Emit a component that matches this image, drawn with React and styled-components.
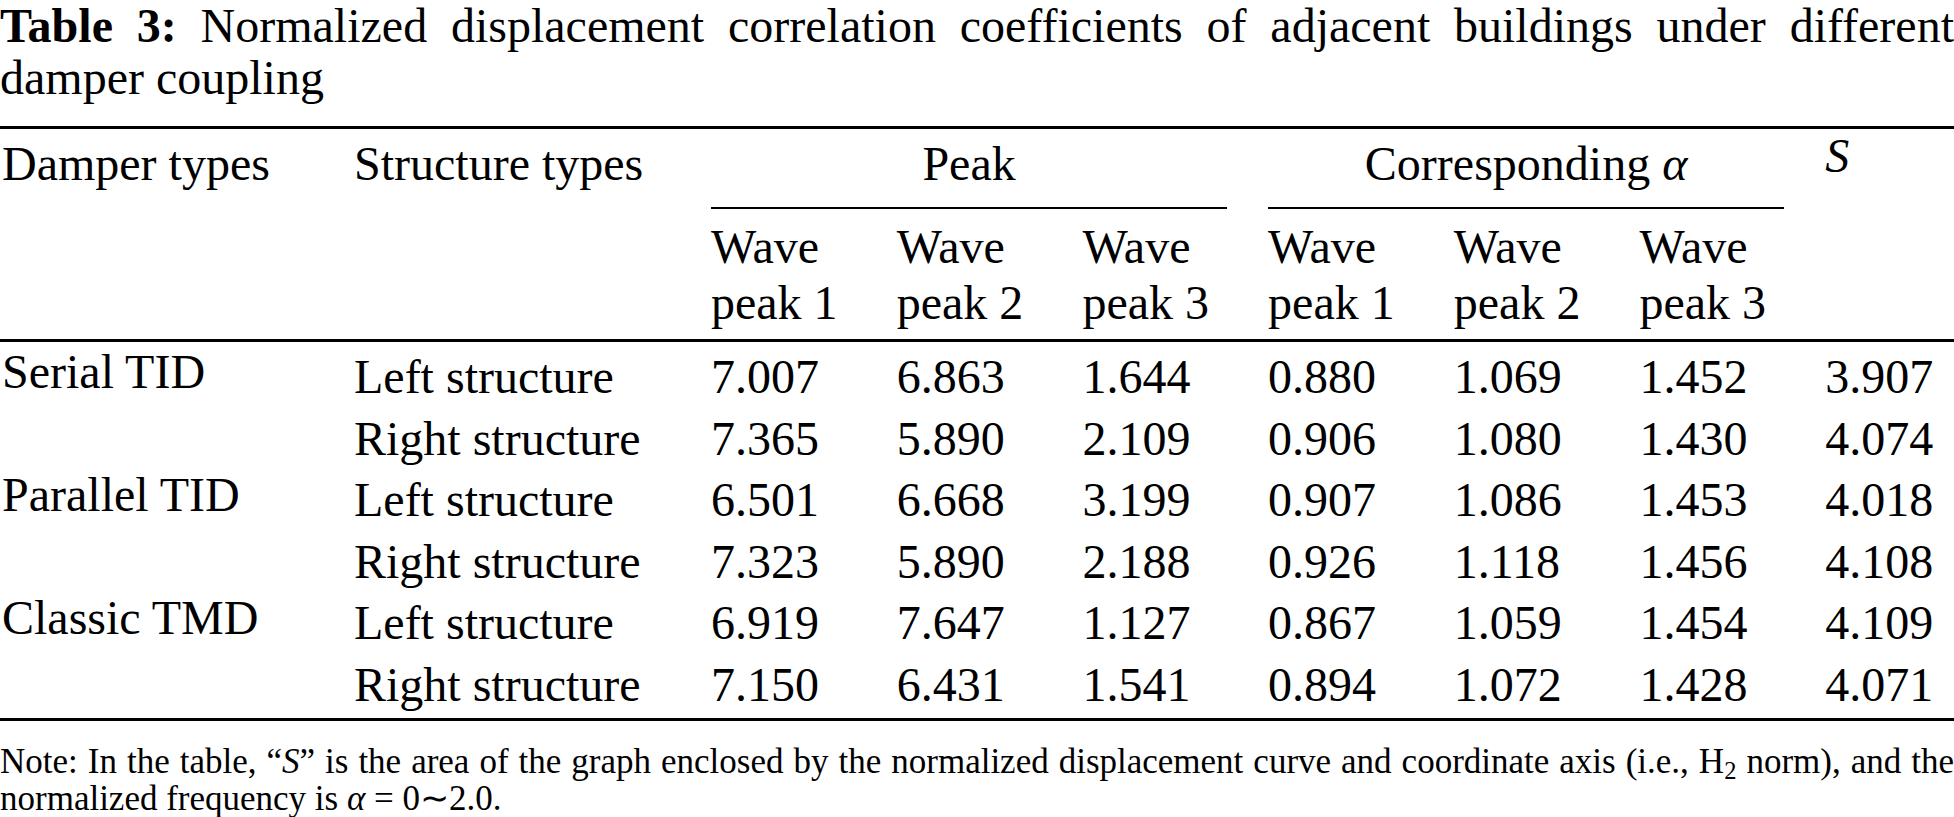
import React from "react";
import styled, { createGlobalStyle } from "styled-components";

const GlobalStyle = createGlobalStyle`
  html, body {
    margin: 0;
    padding: 0;
    background: #ffffff;
  }
  body {
    font-family: "Liberation Serif", "Times New Roman", serif;
    color: #000000;
  }
`;

const groups = [
  {
    damper: "Serial TID",
    rows: [
      { side: "Left structure", peak: ["7.007", "6.863", "1.644"], alpha: ["0.880", "1.069", "1.452"], s: "3.907" },
      { side: "Right structure", peak: ["7.365", "5.890", "2.109"], alpha: ["0.906", "1.080", "1.430"], s: "4.074" },
    ],
  },
  {
    damper: "Parallel TID",
    rows: [
      { side: "Left structure", peak: ["6.501", "6.668", "3.199"], alpha: ["0.907", "1.086", "1.453"], s: "4.018" },
      { side: "Right structure", peak: ["7.323", "5.890", "2.188"], alpha: ["0.926", "1.118", "1.456"], s: "4.108" },
    ],
  },
  {
    damper: "Classic TMD",
    rows: [
      { side: "Left structure", peak: ["6.919", "7.647", "1.127"], alpha: ["0.867", "1.059", "1.454"], s: "4.109" },
      { side: "Right structure", peak: ["7.150", "6.431", "1.541"], alpha: ["0.894", "1.072", "1.428"], s: "4.071" },
    ],
  },
];

const App = () => {
  return (
    <Page>
      <GlobalStyle />
      <Caption>
        <b>Table 3:</b> Normalized displacement correlation coefficients of adjacent buildings under different
        damper coupling
      </Caption>
      <Table>
        <colgroup>
          <col style={{ width: 354 }} />
          <col style={{ width: 357 }} />
          <col style={{ width: 185.7 }} />
          <col style={{ width: 185.7 }} />
          <col style={{ width: 185.7 }} />
          <col style={{ width: 185.7 }} />
          <col style={{ width: 185.7 }} />
          <col style={{ width: 185.7 }} />
          <col />
        </colgroup>
        <thead>
          <tr>
            <HeadCell rowSpan={2} $first $ruled>Damper types</HeadCell>
            <HeadCell rowSpan={2} $ruled>Structure types</HeadCell>
            <HeadCell colSpan={3}>
              <GroupLabel>Peak</GroupLabel>
            </HeadCell>
            <HeadCell colSpan={3}>
              <GroupLabel>
                Corresponding <i>α</i>
              </GroupLabel>
            </HeadCell>
            <HeadCell rowSpan={2} $ruled $raised>
              <i>S</i>
            </HeadCell>
          </tr>
          <tr>
            {[1, 2, 3, 1, 2, 3].map((n, i) => (
              <SubHeadCell key={i}>
                Wave
                <br />
                peak {n}
              </SubHeadCell>
            ))}
          </tr>
        </thead>
        <tbody>
          {groups.map((g, gi) =>
            g.rows.map((r, ri) => {
              const pos = gi * 2 + ri;
              const edge = pos === 0 ? "top" : pos === 5 ? "bottom" : "";
              return (
                <tr key={g.damper + ri}>
                  {ri === 0 && (
                    <DamperCell rowSpan={2} $edge={edge}>
                      {g.damper}
                    </DamperCell>
                  )}
                  <Cell $edge={edge}>{r.side}</Cell>
                  {r.peak.map((v, i) => (
                    <Cell key={"p" + i} $edge={edge}>{v}</Cell>
                  ))}
                  {r.alpha.map((v, i) => (
                    <Cell key={"a" + i} $edge={edge}>{v}</Cell>
                  ))}
                  <Cell $edge={edge}>{r.s}</Cell>
                </tr>
              );
            })
          )}
        </tbody>
      </Table>
      <Note>
        Note: In the table, “<i>S</i>” is the area of the graph enclosed by the normalized displacement curve and
        coordinate axis (i.e., H<Sub>2</Sub> norm), and the normalized frequency is <i>α</i> = 0∼2.0.
      </Note>
    </Page>
  );
};

export default App;

const Page = styled.div`
  width: 1954px;
  overflow: hidden;
`;

const Caption = styled.div`
  font-size: 48px;
  line-height: 52px;
  text-align: justify;
  margin-bottom: 22px;

  b {
    font-weight: 700;
  }
`;

const Table = styled.table`
  width: 1954px;
  table-layout: fixed;
  border-collapse: separate;
  border-spacing: 0;
  border-top: 3px solid #000;
  border-bottom: 3px solid #000;
  font-size: 48px;
`;

const HeadCell = styled.th`
  font-weight: 400;
  text-align: left;
  vertical-align: top;
  padding: 5px 0 0 ${(p) => (p.$first ? "2px" : "0")};
  line-height: ${(p) => (p.$raised ? "44px" : "60px")};
  white-space: nowrap;
  border-bottom: ${(p) => (p.$ruled ? "3px solid #000" : "none")};
`;

const GroupLabel = styled.div`
  text-align: center;
  margin-right: 41px;
  padding-bottom: 13px;
  border-bottom: 2px solid #000;
  white-space: nowrap;
`;

const SubHeadCell = styled.th`
  font-weight: 400;
  text-align: left;
  vertical-align: top;
  line-height: 56px;
  padding: 10px 0 8px 0;
  border-bottom: 3px solid #000;
  white-space: nowrap;
`;

const Cell = styled.td`
  text-align: left;
  vertical-align: top;
  line-height: 61.5px;
  white-space: nowrap;
  padding: ${(p) => (p.$edge === "top" ? "4px 0 0 0" : p.$edge === "bottom" ? "0 0 3px 0" : "0")};
`;

const DamperCell = styled(Cell)`
  line-height: 51px;
  padding-left: 2px;
  padding-top: ${(p) => (p.$edge === "top" ? "4px" : "0")};
`;

const Note = styled.p`
  margin: 22px 0 0 0;
  font-size: 35px;
  line-height: 37px;
  text-align: justify;
`;

const Sub = styled.sub`
  font-size: 0.7em;
  line-height: 0;
  vertical-align: -0.25em;
`;
